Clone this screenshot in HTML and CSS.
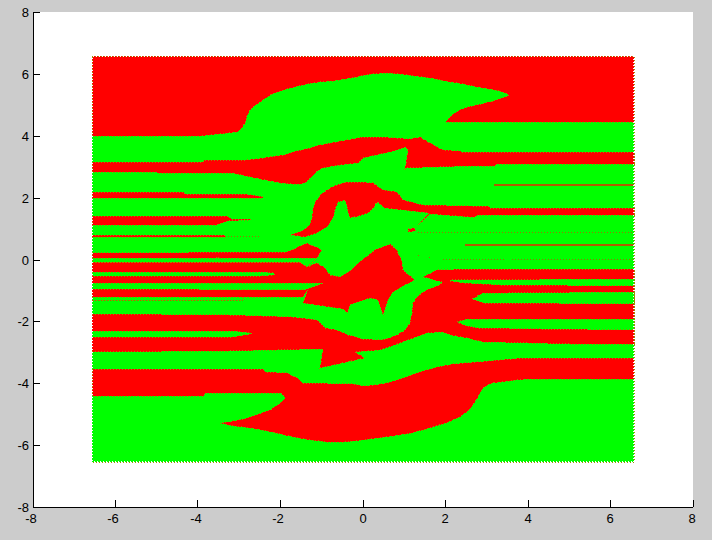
FILE: index.html
```html
<!DOCTYPE html>
<html lang="en">
<head>
<meta charset="utf-8">
<title>Region plot</title>
<link rel="stylesheet" href="styles.css">
</head>
<body>
<svg class="figure" width="712" height="540" viewBox="0 0 712 540" xmlns="http://www.w3.org/2000/svg">
  <rect class="axes-bg" x="34" y="12" width="659" height="495"/>

  <g class="regions">
    <rect class="green" x="92" y="56" width="542" height="406"/>

    <polygon class="red" points="92,56 634,56 634,122 445,122 452,115 460,110 468,107 477,105 489,102 500,99 509,95 500,91 489,89 477,87 463,84 450,82 440,80 430,78 415,76 400,74 386,73 373,74 365,75 357,77 345,79 333,81 320,82 307,84 295,87 283,90 272,94 263,100 256,105 250,110 247,116 245,123 242,128 237,132 229,133 220,134 200,136 92,136"/>
    <polygon class="red" points="92,162 203,162 204,160 247,160 263,158 283,155 297,151 310,148 320,145 330,143 347,140 363,137 380,137 395,138 410,139 420,137 430,143 443,150 460,151 461,152 634,152 634,164 496,164 495,166 470,166 407,168 405,169 408,150 405,147 390,152 363,158 358,163 340,165 323,168 316,172 310,178 306,182 302,184 291,184 280,183 265,180 250,177 233,173 157,173 156,172 92,172"/>
    <polygon class="red" points="92,192 183,192 185,194 245,194 258,196 263,197 262,198 92,198"/>
    <polygon class="red" points="92,216 227,216 232,219 250,219 250,220 228,221 217,225 92,225"/>
    <polygon class="red" points="92,235 225,235 225,237 92,237"/>
    <polygon class="red" points="345,182 360,182 373,183 383,190 397,192 403,200 423,205 470,206 488,206 490,208 634,208 634,215 477,215 475,217 470,217 430,214 418,225 429,213 385,208 377,202 372,210 368,213 359,216 350,218 347,207 345,200 338,202 335,210 333,218 327,227 317,233 305,237 290,235 302,231 310,225 312,218 313,210 316,201 322,193 334,186"/>
    <polygon class="red" points="408,229 415,228 415,231 408,232"/>

    <polygon class="red" points="92,253 287,252 307,243 322,250 317,258 92,258"/>
    <polygon class="red" points="216,257 219,257 218,262 216,262"/>
    <polygon class="red" points="92,262 300,262 307,267 317,263 325,268 330,275 340,277 350,271 362,260 375,250 390,244 397,250 402,262 403,270 415,280 403,286 393,292 388,300 383,315 378,300 370,298 350,305 347,313 343,309 323,306 303,303 308,290 303,297 92,297"/>
    <polygon class="red" points="92,314 230,315 293,317 317,320 325,328 337,330 348,335 363,339 380,340 390,338 397,335 405,330 410,323 412,313 413,303 417,297 423,292 431,288 440,285 442,282 423,277 437,270 470,269 634,269 634,344 570,344 483,342 467,338 450,335 443,332 427,333 414,338 403,342 392,346 380,350 355,352 365,358 320,368 323,349 230,351 92,352"/>
    <polygon class="red" points="92,369 263,369 265,372 287,373 297,378 302,383 353,384 363,386 375,385 387,383 402,378 417,373 427,370 437,367 453,364 477,362 522,358 634,358 634,379 530,379 517,380 493,383 488,385 483,388 479,395 475,402 469,410 460,417 446,423 430,428 412,433 393,436 378,438 363,440 345,442 327,442 310,440 293,437 280,434 267,431 250,428 233,426 220,423 228,422 243,419 257,415 270,410 279,404 285,398 281,393 205,393 204,396 92,396"/>

    <polygon class="green" points="92,258 317,258 307,267 300,262 92,262"/>
    <polygon class="green" points="92,272 262,272 274,273 274,275 262,276 92,276"/>
    <polygon class="green" points="92,283 323,283 305,290 92,289"/>
    <polygon class="green" points="92,297 243,297 243,300 92,300"/>
    <polygon class="green" points="92,331 233,331 251,333 251,334 233,337 92,337"/>
    <polygon class="green" points="450,281 463,283 500,285 634,286 634,279 450,280"/>
    <polygon class="green" points="472,299 483,293 507,293 634,292 634,304 483,303"/>
    <polygon class="green" points="457,322 467,319 634,319 634,330 540,329 478,328 467,326"/>

    <path class="thin" d="M494 185H634M465 245H634"/>
    <path class="dots" d="M225 236H259M418 232H634M443 259H505M512 259H634M92 300H243M418 255h2M429 257h3"/>
    <rect class="edge" x="92.5" y="56.5" width="541" height="405"/>
  </g>

  <path class="axis" d="M33.5 12V507.5H693M33 12.5H40M33 74.5H40M33 136.5H40M33 198.5H40M33 260.5H40M33 321.5H40M33 383.5H40M33 445.5H40M115.5 507V500M197.5 507V500M280.5 507V500M363.5 507V500M445.5 507V500M528.5 507V500M610.5 507V500M693.5 507V500"/>

  <g class="labels y-labels">
    <text x="29" y="17">8</text>
    <text x="29" y="79">6</text>
    <text x="29" y="141">4</text>
    <text x="29" y="203">2</text>
    <text x="29" y="265">0</text>
    <text x="29" y="326">-2</text>
    <text x="29" y="388">-4</text>
    <text x="29" y="450">-6</text>
    <text x="29" y="512">-8</text>
  </g>
  <g class="labels x-labels">
    <text x="31" y="523">-8</text>
    <text x="113" y="523">-6</text>
    <text x="196" y="523">-4</text>
    <text x="278" y="523">-2</text>
    <text x="363" y="523">0</text>
    <text x="445" y="523">2</text>
    <text x="528" y="523">4</text>
    <text x="610" y="523">6</text>
    <text x="692" y="523">8</text>
  </g>
</svg>
</body>
</html>
```

FILE: styles.css
```css
html,
body {
  margin: 0;
  padding: 0;
  background: #cccccc;
}

.figure {
  display: block;
}

.axes-bg {
  fill: #ffffff;
}

.regions {
  shape-rendering: crispEdges;
}

.red,
.green {
  stroke: #a08a00;
  stroke-width: 1;
  stroke-dasharray: 1 2;
}

.red {
  fill: #ff0000;
}

.green {
  fill: #00ff00;
}

.thin {
  fill: none;
  stroke: #b05a00;
  stroke-width: 2;
}

.dots {
  fill: none;
  stroke: #a07000;
  stroke-width: 1;
  stroke-dasharray: 1 2;
}

.edge {
  fill: none;
  stroke: #ffffff;
  stroke-width: 1;
  stroke-dasharray: 1 2;
}

.axis {
  fill: none;
  stroke: #000000;
  stroke-width: 1;
  shape-rendering: crispEdges;
}

.labels {
  font-family: "Liberation Sans", Arial, sans-serif;
  font-size: 13px;
  fill: #000000;
}

.y-labels {
  text-anchor: end;
}

.x-labels {
  text-anchor: middle;
}
```
